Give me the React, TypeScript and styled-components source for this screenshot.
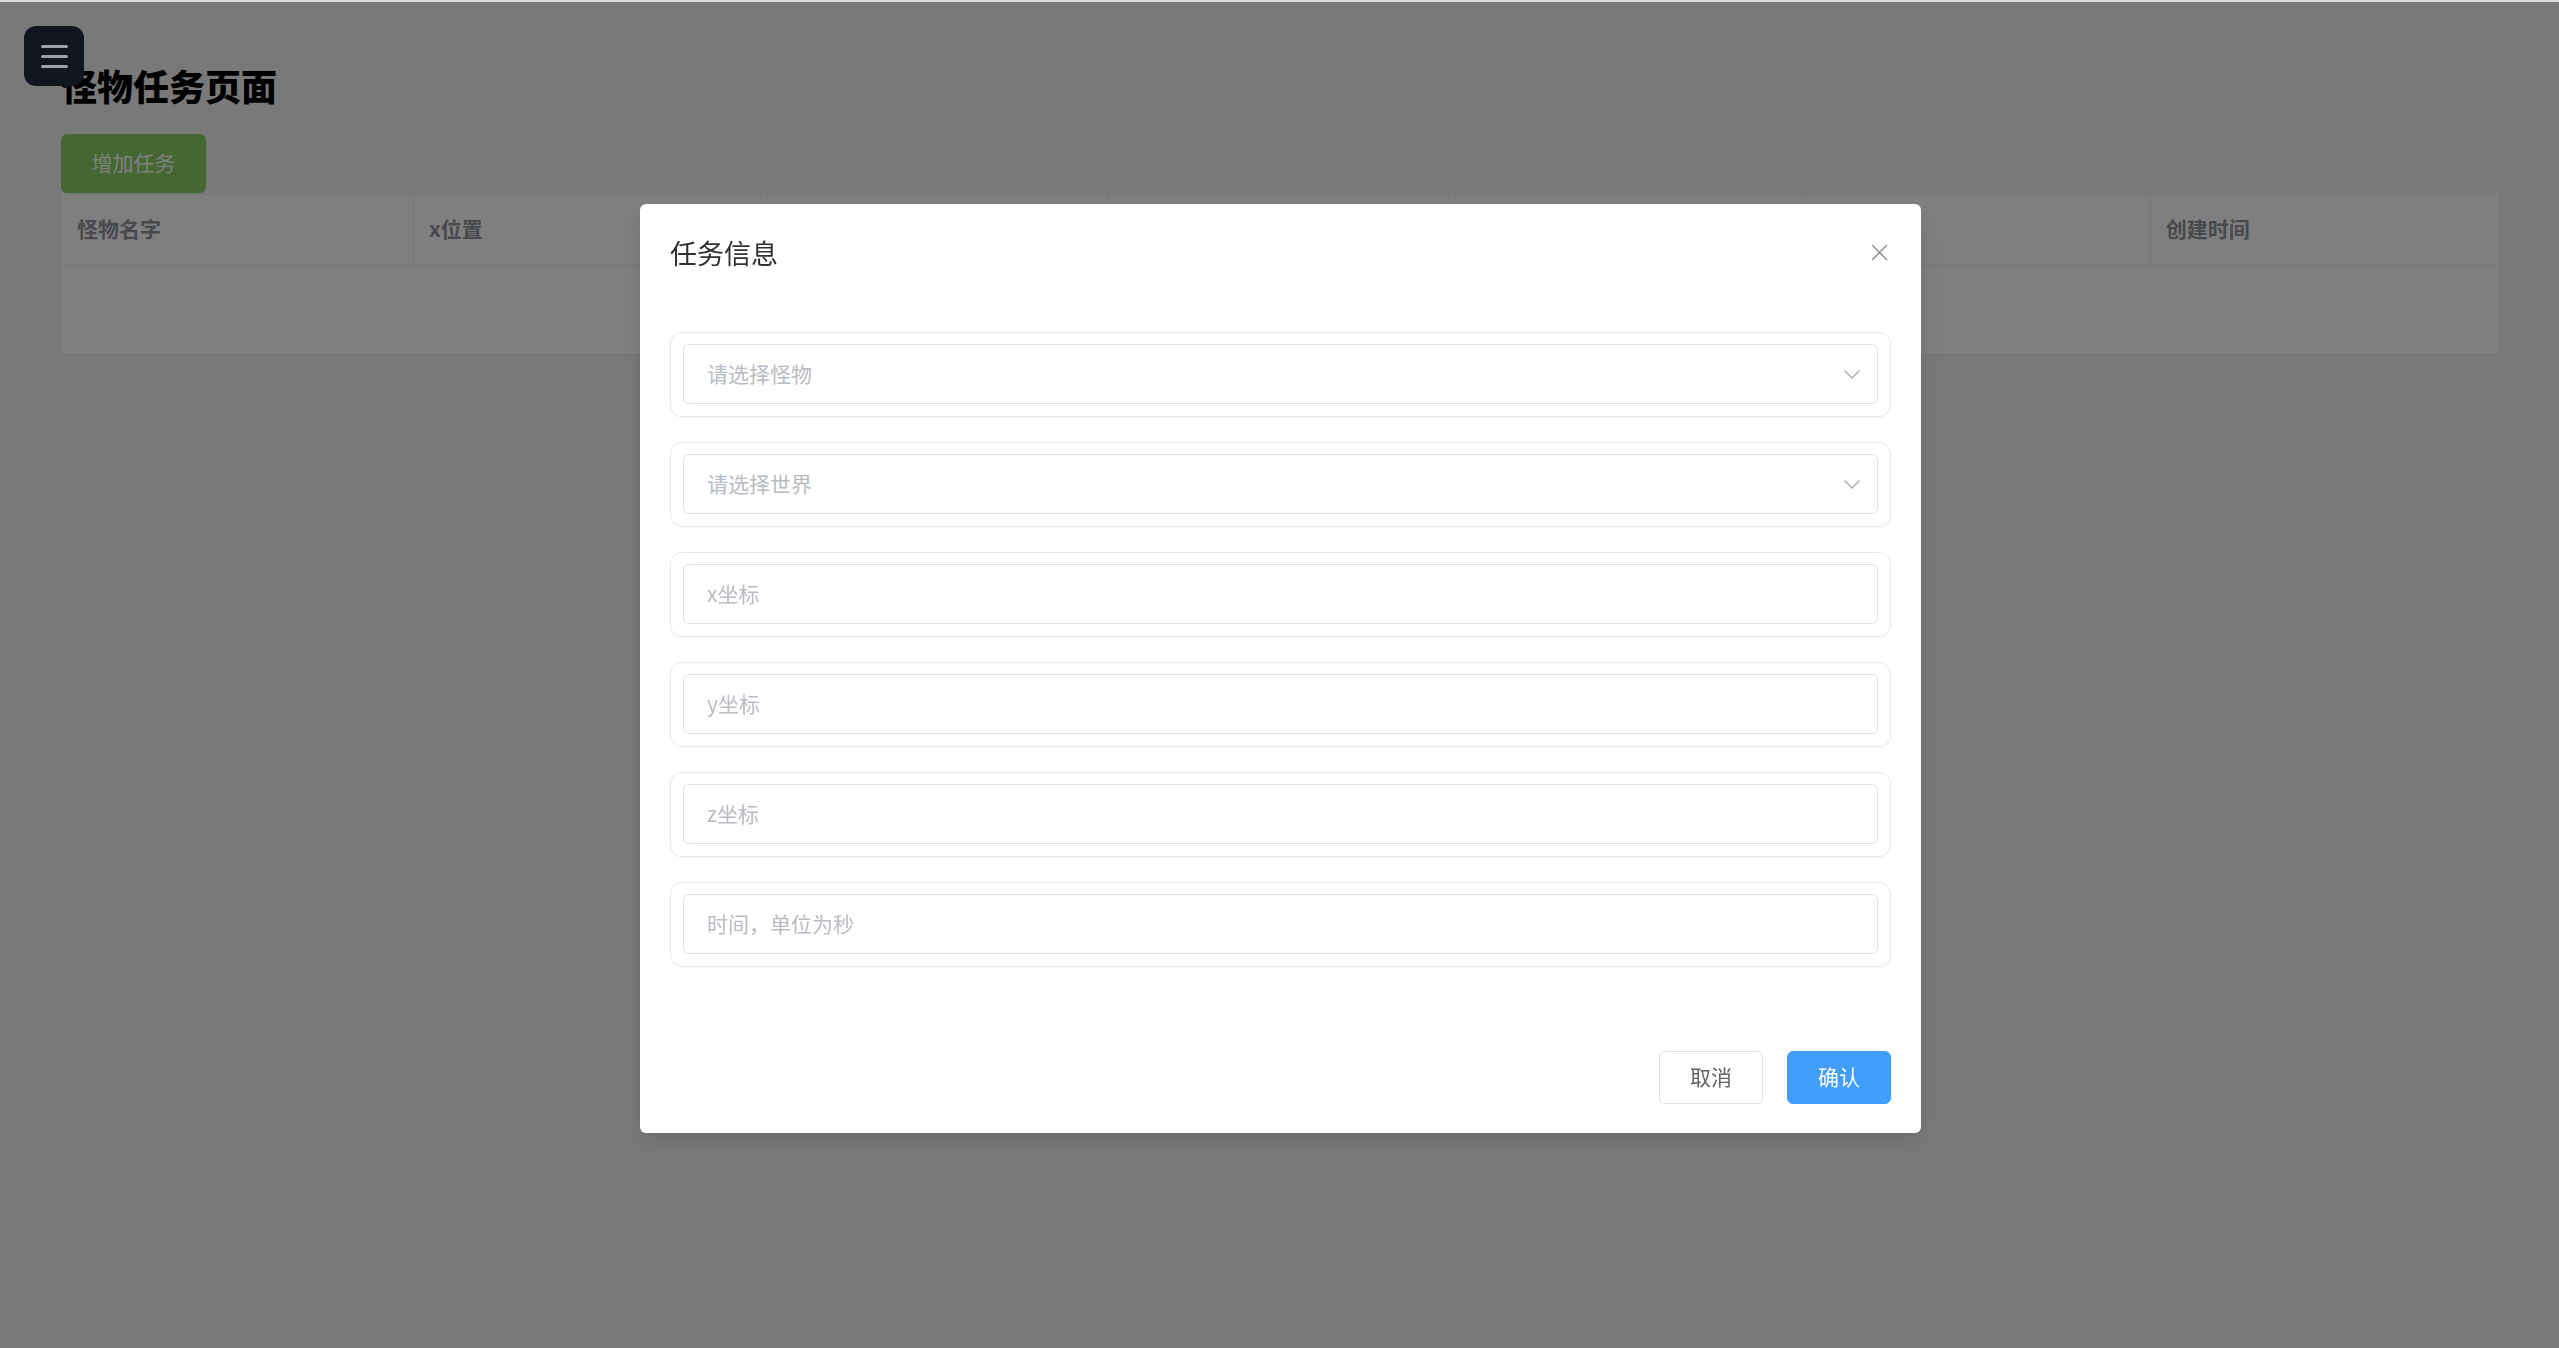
import React from "react";
import styled, { createGlobalStyle } from "styled-components";

const GlobalStyle = createGlobalStyle`
  html, body {
    margin: 0;
    padding: 0;
  }
  body {
    background: #f3f3f3;
    border-top: 2px solid #dcdcdc;
    font-family: "Noto Sans CJK SC", "Noto Sans", "Liberation Sans", sans-serif;
    min-height: 1346px;
    overflow: hidden;
  }
  * { box-sizing: border-box; }
`;

const Page = styled.div`
  padding: 61px 60px 0 61px;
`;

const PageTitle = styled.h1`
  margin: 0;
  font-size: 36px;
  line-height: 44px;
  font-weight: 900;
  color: #000;
`;

const AddButton = styled.button`
  margin-top: 27px;
  display: flex;
  align-items: center;
  justify-content: center;
  width: 145px;
  height: 59px;
  border: none;
  border-radius: 6px;
  background: #8ad067;
  color: #fff;
  font-family: inherit;
  font-size: 21px;
  padding: 0 0 3px 0;
`;

const Table = styled.div`
  margin-top: 1px;
  background: #fff;
  border: 1px solid #f0f1f4;
  border-bottom-color: #e8eaee;
`;

const HeaderRow = styled.div`
  display: grid;
  grid-template-columns: 352px repeat(6, 1fr);
  height: 71px;
  border-bottom: 1px solid #ebeef5;
`;

const HeaderCell = styled.div<{ $last?: boolean }>`
  display: flex;
  align-items: center;
  padding: 0 15px 4px 15px;
  font-size: 21px;
  font-weight: 700;
  color: #909399;
  border-right: ${(p) => (p.$last ? "none" : "1px solid #ebeef5")};
`;

const EmptyBody = styled.div`
  height: 88px;
  display: flex;
  align-items: center;
  justify-content: center;
  font-size: 21px;
  color: #909399;
`;

const MenuButton = styled.button`
  position: fixed;
  left: 24px;
  top: 26px;
  z-index: 30;
  width: 60px;
  height: 60px;
  border: none;
  border-radius: 12px;
  background: #12161e;
  display: flex;
  flex-direction: column;
  align-items: center;
  justify-content: center;
  gap: 7px;
  padding: 0;
`;

const MenuLine = styled.span`
  display: block;
  width: 27px;
  height: 3px;
  border-radius: 2px;
  background: #9ca3af;
`;

const Overlay = styled.div`
  position: fixed;
  left: 0;
  right: 0;
  top: 2px;
  bottom: 0;
  z-index: 20;
  background: rgba(0, 0, 0, 0.5);
  display: flex;
  justify-content: center;
  align-items: flex-start;
  padding-left: 2px;
`;

const Dialog = styled.div`
  margin-top: 202px;
  width: 1281px;
  background: #fff;
  border-radius: 6px;
  box-shadow: 0 12px 32px 4px rgba(0, 0, 0, 0.04), 0 8px 20px rgba(0, 0, 0, 0.08);
  padding: 30px 30px 29px 30px;
  display: flex;
  flex-direction: column;
`;

const DialogHeader = styled.div`
  height: 40px;
  display: flex;
  align-items: center;
  justify-content: space-between;
`;

const DialogTitle = styled.span`
  font-size: 27px;
  line-height: 40px;
  color: #303133;
  margin-top: -3px;
`;

const CloseButton = styled.button`
  border: none;
  background: transparent;
  padding: 0;
  margin: -4px 3px 0 0;
  width: 17px;
  height: 17px;
  display: flex;
`;

const DialogBody = styled.div`
  margin-top: 58px;
  display: flex;
  flex-direction: column;
  gap: 25px;
`;

const FormCard = styled.div`
  border: 1px solid #e6e8ec;
  border-radius: 12px;
  padding: 11px 12px 12px 12px;
  box-shadow: 0 1px 3px rgba(0, 0, 0, 0.04);
`;

const fieldBase = `
  width: 100%;
  height: 60px;
  border: 1px solid #dcdfe6;
  border-radius: 6px;
  background: #fff;
  font-family: "Noto Sans CJK SC", "Noto Sans", sans-serif;
  font-size: 21px;
  color: #606266;
`;

const TextInput = styled.input`
  ${fieldBase}
  padding: 0 17px 3px 23px;
  display: block;
  outline: none;
  &::placeholder {
    color: #b8bbc1;
  }
`;

const SelectTrigger = styled.div`
  ${fieldBase}
  padding: 0 17px 0 23px;
  display: flex;
  align-items: center;
  justify-content: space-between;
`;

const Placeholder = styled.span`
  color: #b8bbc1;
  margin-top: -3px;
`;

const DialogFooter = styled.div`
  margin-top: 84px;
  display: flex;
  justify-content: flex-end;
  gap: 24px;
`;

const FooterButton = styled.button<{ $primary?: boolean }>`
  width: 104px;
  height: 53px;
  border-radius: 6px;
  font-family: inherit;
  font-size: 21px;
  padding: 0 0 3px 0;
  border: 1px solid ${(p) => (p.$primary ? "#409eff" : "#dcdfe6")};
  background: ${(p) => (p.$primary ? "#409eff" : "#fff")};
  color: ${(p) => (p.$primary ? "#fff" : "#606266")};
`;

const Chevron = () => (
  <svg width="16" height="9" viewBox="0 0 16 9" fill="none">
    <polyline points="1,1 8,8 15,1" stroke="#a8abb2" strokeWidth="1.4" strokeLinecap="round" strokeLinejoin="round" />
  </svg>
);

const CloseIcon = () => (
  <svg width="17" height="17" viewBox="0 0 17 17" fill="none">
    <line x1="1.5" y1="1.5" x2="15.5" y2="15.5" stroke="#909399" strokeWidth="1.6" strokeLinecap="round" />
    <line x1="15.5" y1="1.5" x2="1.5" y2="15.5" stroke="#909399" strokeWidth="1.6" strokeLinecap="round" />
  </svg>
);

const columns = ["怪物名字", "x位置", "y位置", "z位置", "世界", "时间", "创建时间"];

export default function App() {
  return (
    <>
      <GlobalStyle />
      <MenuButton aria-label="menu">
        <MenuLine />
        <MenuLine />
        <MenuLine />
      </MenuButton>
      <Page>
        <PageTitle>怪物任务页面</PageTitle>
        <AddButton>增加任务</AddButton>
        <Table>
          <HeaderRow>
            {columns.map((c, i) => (
              <HeaderCell key={c} $last={i === columns.length - 1}>
                {c}
              </HeaderCell>
            ))}
          </HeaderRow>
          <EmptyBody>No Data</EmptyBody>
        </Table>
      </Page>
      <Overlay>
        <Dialog>
          <DialogHeader>
            <DialogTitle>任务信息</DialogTitle>
            <CloseButton aria-label="close">
              <CloseIcon />
            </CloseButton>
          </DialogHeader>
          <DialogBody>
            <FormCard>
              <SelectTrigger>
                <Placeholder>请选择怪物</Placeholder>
                <Chevron />
              </SelectTrigger>
            </FormCard>
            <FormCard>
              <SelectTrigger>
                <Placeholder>请选择世界</Placeholder>
                <Chevron />
              </SelectTrigger>
            </FormCard>
            <FormCard>
              <TextInput placeholder="x坐标" />
            </FormCard>
            <FormCard>
              <TextInput placeholder="y坐标" />
            </FormCard>
            <FormCard>
              <TextInput placeholder="z坐标" />
            </FormCard>
            <FormCard>
              <TextInput placeholder="时间，单位为秒" />
            </FormCard>
          </DialogBody>
          <DialogFooter>
            <FooterButton>取消</FooterButton>
            <FooterButton $primary>确认</FooterButton>
          </DialogFooter>
        </Dialog>
      </Overlay>
    </>
  );
}
